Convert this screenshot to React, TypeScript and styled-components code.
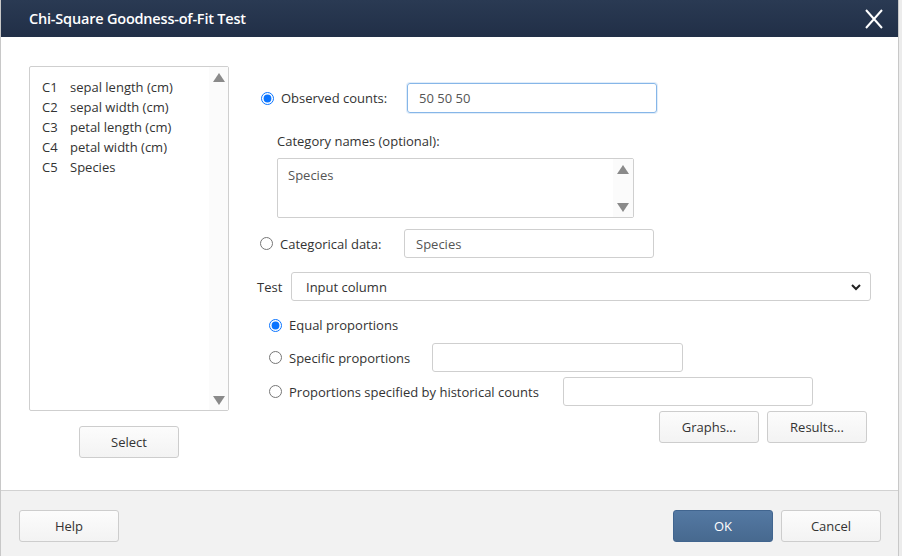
import React from "react";
import styled, { createGlobalStyle } from "styled-components";

const Global = createGlobalStyle`
  html, body { margin: 0; padding: 0; background: #ececec; }
  body { font-family: "Open Sans", "Noto Sans", Arial, sans-serif; color: #333; }
  * { box-sizing: border-box; }
`;

const Dialog = styled.div`
  width: 899px;
  height: 556px;
  display: flex;
  flex-direction: column;
  background: #fff;
  border-left: 1px solid #c8c8c8;
  border-right: 1px solid #c8c8c8;
`;

const TitleBar = styled.div`
  height: 37px;
  flex: none;
  display: flex;
  align-items: center;
  justify-content: space-between;
  padding: 0 14px 0 28px;
  background: linear-gradient(#2a3a53, #212f47);
  color: #fff;
`;

const Title = styled.div`
  font-size: 14.5px;
  font-weight: 600;
  letter-spacing: -0.2px;
`;

const CloseIcon = styled.svg`
  width: 20px;
  height: 20px;
  display: block;
`;

const Body = styled.div`
  flex: 1;
  display: flex;
  padding: 29px 0 0 28px;
  border-bottom: 1px solid #d2d2d2;
`;

const LeftCol = styled.div`
  width: 200px;
  display: flex;
  flex-direction: column;
  align-items: center;
`;

const ListBox = styled.div`
  width: 200px;
  height: 345px;
  border: 1px solid #cfcfcf;
  border-radius: 2px;
  display: flex;
`;

const ListItems = styled.div`
  flex: 1;
  padding: 10px 0 0 12px;
  font-size: 13px;
  line-height: 20px;
`;

const ListRow = styled.div`
  display: flex;
`;

const ColId = styled.span`
  width: 28px;
`;

const ScrollTrack = styled.div`
  width: 19px;
  display: flex;
  flex-direction: column;
  justify-content: space-between;
  align-items: center;
  padding: 6px 0 5px;
  background: #fbfbfb;
`;

const Tri = styled.div<{ $down?: boolean }>`
  width: 0;
  height: 0;
  border-left: 6px solid transparent;
  border-right: 6px solid transparent;
  ${(p) =>
    p.$down ? "border-top: 9px solid #8a8a8a;" : "border-bottom: 9px solid #8a8a8a;"}
`;

const Button = styled.button<{ $primary?: boolean }>`
  width: 100px;
  height: 32px;
  border-radius: 3px;
  border: 1px solid ${(p) => (p.$primary ? "#41658f" : "#cdcdcd")};
  background: ${(p) =>
    p.$primary ? "linear-gradient(#5479a3, #47698f)" : "linear-gradient(#fcfcfc, #f3f3f3)"};
  color: ${(p) => (p.$primary ? "#fff" : "#333")};
  font-family: "Open Sans", Arial, sans-serif;
  font-size: 13px;
  padding: 0;
`;

const SelectButton = styled(Button)`
  margin-top: 15px;
`;

const RightCol = styled.div`
  flex: 1;
  padding: 17px 0 0 28px;
  display: flex;
  flex-direction: column;
  font-size: 13px;
`;

const Row = styled.div<{ $indent?: number; $h?: number; $mt?: number }>`
  display: flex;
  align-items: center;
  height: ${(p) => p.$h ?? 29}px;
  margin-left: ${(p) => p.$indent ?? 0}px;
  margin-top: ${(p) => p.$mt ?? 0}px;
`;

const Radio = styled.input.attrs({ type: "radio" })`
  width: 13px;
  height: 13px;
  margin: 0 7px 0 0;
  accent-color: #0a74ff;
  flex: none;
`;

const Label = styled.span<{ $w?: number }>`
  ${(p) => (p.$w ? `width: ${p.$w}px; flex: none;` : "")}
  white-space: nowrap;
`;

const TextBox = styled.div<{ $w: number; $focus?: boolean }>`
  width: ${(p) => p.$w}px;
  height: 100%;
  border: 1px solid ${(p) => (p.$focus ? "#86b6e8" : "#cfcfcf")};
  border-radius: 3px;
  padding: 0 11px;
  display: flex;
  align-items: center;
  color: #555;
  box-shadow: ${(p) => (p.$focus ? "0 0 0 1px rgba(134,182,232,0.25)" : "none")};
`;

const SubLabel = styled.div`
  margin: 19px 0 0 20px;
  height: 18px;
  line-height: 18px;
`;

const TextArea = styled.div`
  margin: 8px 0 0 20px;
  width: 357px;
  height: 60px;
  border: 1px solid #cfcfcf;
  border-radius: 2px;
  display: flex;
`;

const AreaText = styled.div`
  flex: 1;
  padding: 7px 10px;
  color: #555;
`;

const AreaScroll = styled(ScrollTrack)`
  width: 20px;
`;

const SelectBox = styled.div`
  width: 580px;
  height: 100%;
  border: 1px solid #cfcfcf;
  border-radius: 3px;
  padding: 0 8px 0 14px;
  display: flex;
  align-items: center;
  justify-content: space-between;
`;

const Chevron = styled.svg`
  width: 12px;
  height: 12px;
`;

const ActionRow = styled.div`
  display: flex;
  justify-content: flex-end;
  gap: 8px;
  width: 610px;
  margin-top: 5px;
`;

const Footer = styled.div`
  height: 65px;
  flex: none;
  background: #f2f2f2;
  display: flex;
  align-items: flex-start;
  padding: 19px 17px 0 18px;
  gap: 8px;
`;

const Grow = styled.div`
  flex: 1;
`;

const columns = [
  ["C1", "sepal length (cm)"],
  ["C2", "sepal width (cm)"],
  ["C3", "petal length (cm)"],
  ["C4", "petal width (cm)"],
  ["C5", "Species"],
];

export default function App() {
  return (
    <>
      <Global />
      <Dialog>
        <TitleBar>
          <Title>Chi-Square Goodness-of-Fit Test</Title>
          <CloseIcon viewBox="0 0 20 20">
            <path d="M2 1 L18 19 M18 1 L2 19" stroke="#fff" strokeWidth="2" fill="none" />
          </CloseIcon>
        </TitleBar>
        <Body>
          <LeftCol>
            <ListBox>
              <ListItems>
                {columns.map(([id, name]) => (
                  <ListRow key={id}>
                    <ColId>{id}</ColId>
                    <span>{name}</span>
                  </ListRow>
                ))}
              </ListItems>
              <ScrollTrack>
                <Tri />
                <Tri $down />
              </ScrollTrack>
            </ListBox>
            <SelectButton>Select</SelectButton>
          </LeftCol>
          <RightCol>
            <Row $indent={4} $h={30}>
              <Radio name="src" defaultChecked />
              <Label $w={126}>Observed counts:</Label>
              <TextBox $w={250} $focus>
                50 50 50
              </TextBox>
            </Row>
            <SubLabel>Category names (optional):</SubLabel>
            <TextArea>
              <AreaText>Species</AreaText>
              <AreaScroll>
                <Tri />
                <Tri $down />
              </AreaScroll>
            </TextArea>
            <Row $indent={3} $mt={11}>
              <Radio name="src" />
              <Label $w={124}>Categorical data:</Label>
              <TextBox $w={250}>Species</TextBox>
            </Row>
            <Row $mt={14}>
              <Label $w={34}>Test</Label>
              <SelectBox>
                <span>Input column</span>
                <Chevron viewBox="0 0 12 12">
                  <path d="M2 4 L6 8 L10 4" stroke="#222" strokeWidth="2" fill="none" />
                </Chevron>
              </SelectBox>
            </Row>
            <Row $indent={12} $h={20} $mt={14}>
              <Radio name="prop" defaultChecked />
              <Label>Equal proportions</Label>
            </Row>
            <Row $indent={12} $mt={8}>
              <Radio name="prop" />
              <Label $w={143}>Specific proportions</Label>
              <TextBox $w={251} />
            </Row>
            <Row $indent={12} $mt={5}>
              <Radio name="prop" />
              <Label $w={274}>Proportions specified by historical counts</Label>
              <TextBox $w={250} />
            </Row>
            <ActionRow>
              <Button>Graphs...</Button>
              <Button>Results...</Button>
            </ActionRow>
          </RightCol>
        </Body>
        <Footer>
          <Button>Help</Button>
          <Grow />
          <Button $primary>OK</Button>
          <Button>Cancel</Button>
        </Footer>
      </Dialog>
    </>
  );
}
